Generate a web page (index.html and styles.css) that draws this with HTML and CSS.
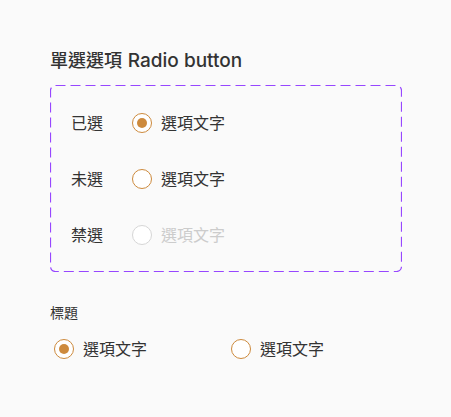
FILE: index.html
```html
<!DOCTYPE html>
<html lang="zh-Hant">
<head>
<meta charset="utf-8">
<title>Radio button</title>
<link rel="stylesheet" href="styles.css">
</head>
<body>
<div class="page">
  <h1 class="title">單選選項 <span class="title-en">Radio button</span></h1>
  <div class="states">
    <div class="row">
      <span class="row-label">已選</span>
      <label class="radio">
        <span class="circle checked"><span class="dot"></span></span>
        <span class="radio-text">選項文字</span>
      </label>
    </div>
    <div class="row">
      <span class="row-label">未選</span>
      <label class="radio">
        <span class="circle"></span>
        <span class="radio-text">選項文字</span>
      </label>
    </div>
    <div class="row">
      <span class="row-label">禁選</span>
      <label class="radio disabled">
        <span class="circle"></span>
        <span class="radio-text">選項文字</span>
      </label>
    </div>
  </div>

  <div class="field">
    <div class="field-label">標題</div>
    <div class="group">
      <label class="radio group-item">
        <span class="circle checked"><span class="dot"></span></span>
        <span class="radio-text">選項文字</span>
      </label>
      <label class="radio group-item">
        <span class="circle"></span>
        <span class="radio-text">選項文字</span>
      </label>
    </div>
  </div>
</div>
</body>
</html>
```

FILE: styles.css
```css
html, body {
  margin: 0;
  padding: 0;
  background: #fafafa;
}

body {
  font-family: "Inter", "Noto Sans CJK TC", sans-serif;
  color: #333333;
}

.page {
  padding: 48px 50px 0 50px;
}

.title {
  margin: 0 0 11px 0;
  font-size: 18px;
  line-height: 26px;
  font-weight: 500;
  color: #333333;
}

.title-en {
  font-size: 19px;
  margin-left: 1px;
}

.states {
  width: 352px;
  box-sizing: border-box;
  padding: 10px 20px 9px 21px;
  background-image: url("data:image/svg+xml;utf8,<svg xmlns='http://www.w3.org/2000/svg' width='352' height='187'><rect x='0.5' y='0.5' width='351' height='186' rx='5' ry='5' fill='none' stroke='%239747FF' stroke-width='1.2' stroke-dasharray='10 5'/></svg>");
  background-repeat: no-repeat;
}

.row {
  display: flex;
  align-items: center;
  height: 56px;
}

.row-label {
  width: 61px;
  flex-shrink: 0;
  font-size: 16px;
  line-height: 24px;
}

.radio {
  display: flex;
  align-items: center;
  gap: 9px;
  font-size: 16px;
  line-height: 24px;
}

.circle {
  width: 20px;
  height: 20px;
  flex-shrink: 0;
  box-sizing: border-box;
  border: 1px solid #cd8a3d;
  border-radius: 50%;
  display: flex;
  align-items: center;
  justify-content: center;
  background: #ffffff;
}

.dot {
  width: 10px;
  height: 10px;
  border-radius: 50%;
  background: #cd8a3d;
}

.radio.disabled .circle {
  border-color: #d6d6d6;
}

.radio.disabled .radio-text {
  color: #cccccc;
}

.field {
  margin-top: 30px;
}

.field-label {
  font-size: 14px;
  line-height: 22px;
  margin-bottom: 13px;
}

.group {
  display: flex;
  padding-left: 4px;
}

.group-item {
  width: 177px;
  flex-shrink: 0;
}
```
